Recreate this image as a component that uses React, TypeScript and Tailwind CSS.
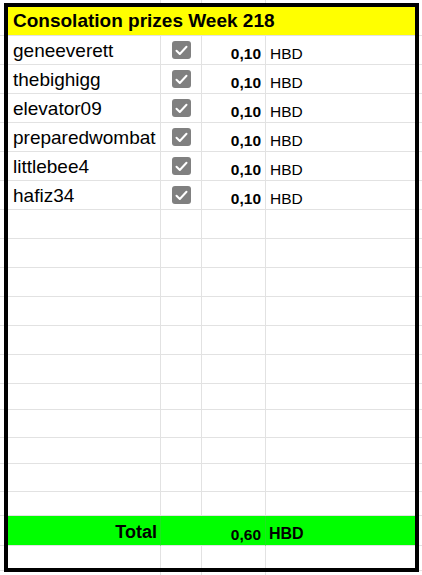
import React from "react";

const names = [
  "geneeverett",
  "thebighigg",
  "elevator09",
  "preparedwombat",
  "littlebee4",
  "hafiz34",
];

const emptyRows = [
  "h-[29px]",
  "h-[29px]",
  "h-[29px]",
  "h-[29px]",
  "h-[29px]",
  "h-[29px]",
  "h-[26px]",
  "h-[28px]",
  "h-[26px]",
  "h-[28px]",
  "h-[24px]",
];

const cols = "grid grid-cols-[8px_153px_41px_64px_153px_3px]";

const Checkbox = () => (
  <div className="w-[19px] h-[18px] rounded-[3px] bg-[#808080] flex items-center justify-center">
    <svg width="13" height="11" viewBox="0 0 13 11" fill="none">
      <path
        d="M1.5 5.8 L4.8 9 L11.5 1.8"
        stroke="white"
        strokeWidth="2"
        strokeLinecap="round"
        strokeLinejoin="round"
      />
    </svg>
  </div>
);

const EmptyRow = ({ h }: { h: string }) => (
  <div className={`${cols} ${h}`}>
    <div className="border-b border-[#e2e2e2]" />
    <div className="border-b border-r border-[#e2e2e2]" />
    <div className="border-b border-r border-[#e2e2e2]" />
    <div className="border-b border-r border-[#e2e2e2]" />
    <div className="border-b border-[#e2e2e2]" />
    <div className="border-b border-[#e2e2e2]" />
  </div>
);

const App = () => {
  return (
    <div className="relative w-[422px] h-[575px] bg-white text-black font-['Liberation_Sans',Arial,sans-serif] overflow-hidden">
      {/* top strip */}
      <div className={`${cols} h-[7px]`}>
        <div />
        <div className="border-r border-[#e2e2e2]" />
        <div className="border-r border-[#e2e2e2]" />
        <div className="border-r border-[#e2e2e2]" />
        <div />
        <div />
      </div>

      {/* header */}
      <div className={`${cols} h-[29px]`}>
        <div className="border-b border-[#e2e2e2]" />
        <div className="col-span-4 border-b border-[#e2e2e2] bg-[#ffff00] flex items-end pl-[5px] pb-[3px] text-[19px] leading-[22px] font-bold whitespace-nowrap">
          Consolation prizes Week 218
        </div>
        <div className="border-b border-[#e2e2e2]" />
      </div>

      {/* data rows */}
      {names.map((n) => (
        <div key={n} className={`${cols} h-[29px]`}>
          <div className="border-b border-[#e2e2e2]" />
          <div className="border-b border-r border-[#e2e2e2] flex items-end pl-[5px] pb-[2px] text-[19px] leading-[22px] whitespace-nowrap">
            {n}
          </div>
          <div className="border-b border-r border-[#e2e2e2] flex items-center justify-center">
            <Checkbox />
          </div>
          <div className="border-b border-r border-[#e2e2e2] flex items-end justify-end pr-[4px] pb-[2px] text-[15.5px] leading-[17px] font-bold">
            0,10
          </div>
          <div className="border-b border-[#e2e2e2] flex items-end pl-[4px] pb-[2px] text-[15.5px] leading-[17px]">
            HBD
          </div>
          <div className="border-b border-[#e2e2e2]" />
        </div>
      ))}

      {emptyRows.map((h, i) => (
        <EmptyRow key={i} h={h} />
      ))}

      {/* total */}
      <div className={`${cols} h-[30px]`}>
        <div className="border-b border-[#e2e2e2]" />
        <div className="border-b border-r border-b-[#e2e2e2] border-r-[#1ee61e] bg-[#00ff00] flex items-end justify-end pr-[3px] pb-[3px] text-[18px] leading-[20px] font-bold">
          Total
        </div>
        <div className="border-b border-b-[#e2e2e2] bg-[#00ff00]" />
        <div className="border-b border-r border-b-[#e2e2e2] border-r-[#1ee61e] bg-[#00ff00] flex items-end justify-end pr-[4px] pb-[2px] text-[15.5px] leading-[17px] font-bold">
          0,60
        </div>
        <div className="border-b border-b-[#e2e2e2] bg-[#00ff00] flex items-end pl-[3px] pb-[2px] text-[16px] leading-[18px] font-bold">
          HBD
        </div>
        <div className="border-b border-[#e2e2e2]" />
      </div>

      <EmptyRow h="h-[25px]" />

      {/* bottom strip */}
      <div className={`${cols} h-[4px]`}>
        <div />
        <div className="border-r border-[#e2e2e2]" />
        <div className="border-r border-[#e2e2e2]" />
        <div className="border-r border-[#e2e2e2]" />
        <div />
        <div />
      </div>

      {/* thick outline drawn over the sheet */}
      <div className="absolute left-[4px] top-[3px] w-[415px] h-[569px] border-4 border-black pointer-events-none" />
    </div>
  );
};

export default App;
